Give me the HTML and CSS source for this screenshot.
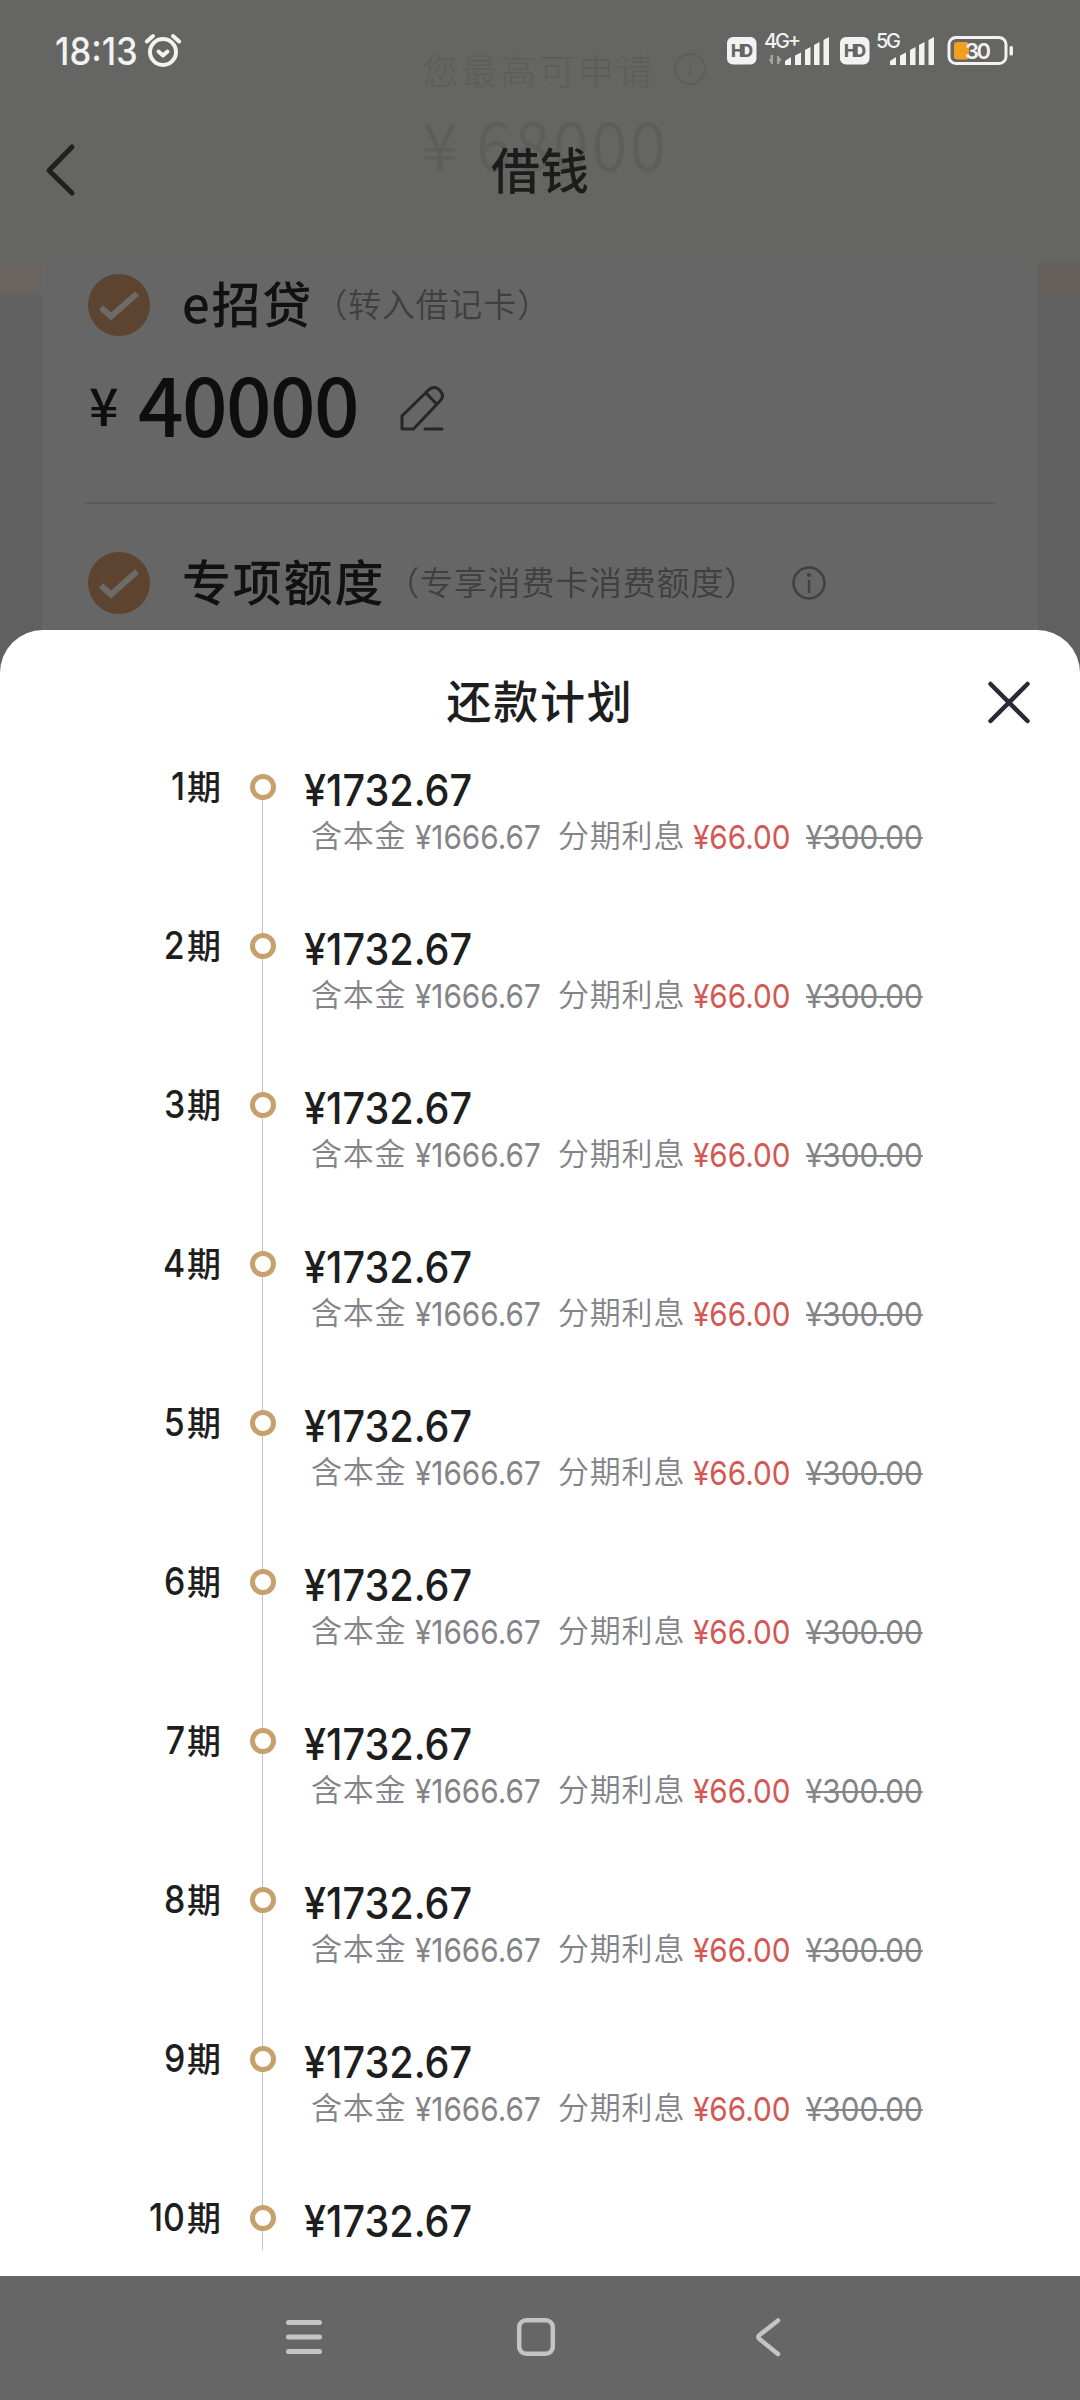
FILE: index.html
```html
<!DOCTYPE html>
<html lang="zh-CN">
<head>
<meta charset="utf-8">
<title>借钱</title>
<link rel="stylesheet" href="styles.css">
</head>
<body>
<div class="screen">
  <div class="page">
    <header class="top">
      <div class="status">
        <span class="time">18:13</span>
        <svg class="alarm" width="40" height="40" viewBox="0 0 40 40" fill="none" stroke="#f2f2f2" stroke-width="4" stroke-linecap="round" stroke-linejoin="round"><circle cx="20" cy="22" r="13"/><path d="M3.8 11.5 10 6M30 6l6.2 5.5M15.5 21.500l4.500 4 4.500-4"/></svg>
        <svg class="signals" width="292" height="40" viewBox="724 31 292 40" fill="#f2f2f2">
          <rect x="727" y="37" width="29.500" height="27.500" rx="6"/><text class="hd" x="731" y="56.500" textLength="22">HD</text>
          <text class="net" x="764" y="48.300" textLength="37">4G+</text>
          <path d="M785 65v-4l6-4v8zM795 65v-9.500l6-3v12.500zM805 65V50l5.500-3v18zM814 65V45l5.500-3v23zM823.500 65V40l5.500-3v28z"/>
          <path d="M773 55v9h-1.500l-3-5h2v-4zM777 64v-8h1.500l3.500 5h-2.500v3z" opacity=".45"/>
          <rect x="840" y="37" width="29.500" height="27.500" rx="6"/><text class="hd" x="844" y="56.500" textLength="22">HD</text>
          <text class="net" x="876" y="48.300" textLength="25">5G</text>
          <path d="M890 65v-4l6-4v8zM900 65v-9.500l6-3v12.500zM910 65V50l5.500-3v18zM919 65V45l5.500-3v23zM928.500 65V40l5.500-3v28z"/>
          <rect x="949" y="37.500" width="57" height="26" rx="7" fill="none" stroke="#f2f2f2" stroke-width="3"/>
          <rect x="954" y="42" width="15" height="17.500" rx="3" fill="#f0a021"/>
          <rect x="1009.500" y="46" width="3.500" height="9.500" rx="1.500"/>
          <text class="level" x="965" y="59.300" textLength="26">30</text>
        </svg>
      </div>
      <div class="ghost">
        <div class="ghost-label"><span>您最高可申请</span><svg width="34" height="34" viewBox="0 0 34 34" fill="none" stroke="#5d5d5c" stroke-width="2"><circle cx="17" cy="17" r="15"/><path d="M17 9v2M17 14v11"/></svg></div>
        <div class="ghost-sum"><span class="ghost-yen">¥</span><span>68000</span></div>
      </div>
      <div class="titlebar">
        <svg class="back" width="32" height="56" viewBox="0 0 32 56" fill="none" stroke="#202020" stroke-width="5" stroke-linecap="round" stroke-linejoin="round"><path d="M27 5 4 28.500 27 51"/></svg>
        <h1>借钱</h1>
      </div>
    </header>
    <main class="body">
      <div class="card">
        <div class="option">
          <svg class="check" width="64" height="64" viewBox="0 0 64 64"><circle cx="32" cy="32" r="31" fill="#5c4430"/><path d="m14 34.500 10 9L50 20.500" fill="none" stroke="#6d6b68" stroke-width="6"/></svg>
          <span class="name">e招贷</span><span class="hint">（转入借记卡）</span>
        </div>
        <div class="amount">
          <span class="yen">¥</span><span class="sum">40000</span>
          <svg width="50" height="50" viewBox="0 0 50 50" fill="none" stroke="#262626" stroke-width="3" stroke-linecap="round" stroke-linejoin="round"><path d="M5 45V32L32 5.500Q38 1 43 6.500T43 17L16.500 45zM29.500 9.500l10 10.500M28 45h17"/></svg>
        </div>
        <div class="option second">
          <svg class="check" width="64" height="64" viewBox="0 0 64 64"><circle cx="32" cy="32" r="31" fill="#5c4430"/><path d="m14 34.500 10 9L50 20.500" fill="none" stroke="#6d6b68" stroke-width="6"/></svg>
          <span class="name">专项额度</span><span class="hint">（专享消费卡消费额度）</span>
          <svg class="info" width="36" height="36" viewBox="0 0 36 36" fill="none" stroke="#404040" stroke-width="2.500"><circle cx="18" cy="18" r="15.500"/><path d="M18 15v13"/><circle cx="18" cy="10" r="2" fill="#404040" stroke="none"/></svg>
        </div>
      </div>
    </main>
  </div>

  <section class="sheet">
    <div class="sheet-head">
      <h2>还款计划</h2>
      <svg class="close" width="48" height="48" viewBox="0 0 48 48" stroke="#2b2838" stroke-width="4.500" stroke-linecap="round"><path d="m5.500 6 37 37M42.500 6l-37 37"/></svg>
    </div>
    <div class="plan">
      <div class="row"><div class="term"><b>1</b>期</div><div class="rail"><i></i></div><div class="detail"><div class="pay">¥1732.67</div><div class="parts"><span>含本金</span><em>¥1666.67</em><span>分期利息</span><em class="now">¥66.00</em><em class="was">¥300.00</em></div></div></div>
      <div class="row"><div class="term"><b>2</b>期</div><div class="rail"><i></i></div><div class="detail"><div class="pay">¥1732.67</div><div class="parts"><span>含本金</span><em>¥1666.67</em><span>分期利息</span><em class="now">¥66.00</em><em class="was">¥300.00</em></div></div></div>
      <div class="row"><div class="term"><b>3</b>期</div><div class="rail"><i></i></div><div class="detail"><div class="pay">¥1732.67</div><div class="parts"><span>含本金</span><em>¥1666.67</em><span>分期利息</span><em class="now">¥66.00</em><em class="was">¥300.00</em></div></div></div>
      <div class="row"><div class="term"><b>4</b>期</div><div class="rail"><i></i></div><div class="detail"><div class="pay">¥1732.67</div><div class="parts"><span>含本金</span><em>¥1666.67</em><span>分期利息</span><em class="now">¥66.00</em><em class="was">¥300.00</em></div></div></div>
      <div class="row"><div class="term"><b>5</b>期</div><div class="rail"><i></i></div><div class="detail"><div class="pay">¥1732.67</div><div class="parts"><span>含本金</span><em>¥1666.67</em><span>分期利息</span><em class="now">¥66.00</em><em class="was">¥300.00</em></div></div></div>
      <div class="row"><div class="term"><b>6</b>期</div><div class="rail"><i></i></div><div class="detail"><div class="pay">¥1732.67</div><div class="parts"><span>含本金</span><em>¥1666.67</em><span>分期利息</span><em class="now">¥66.00</em><em class="was">¥300.00</em></div></div></div>
      <div class="row"><div class="term"><b>7</b>期</div><div class="rail"><i></i></div><div class="detail"><div class="pay">¥1732.67</div><div class="parts"><span>含本金</span><em>¥1666.67</em><span>分期利息</span><em class="now">¥66.00</em><em class="was">¥300.00</em></div></div></div>
      <div class="row"><div class="term"><b>8</b>期</div><div class="rail"><i></i></div><div class="detail"><div class="pay">¥1732.67</div><div class="parts"><span>含本金</span><em>¥1666.67</em><span>分期利息</span><em class="now">¥66.00</em><em class="was">¥300.00</em></div></div></div>
      <div class="row"><div class="term"><b>9</b>期</div><div class="rail"><i></i></div><div class="detail"><div class="pay">¥1732.67</div><div class="parts"><span>含本金</span><em>¥1666.67</em><span>分期利息</span><em class="now">¥66.00</em><em class="was">¥300.00</em></div></div></div>
      <div class="row last"><div class="term"><b>10</b>期</div><div class="rail"><i></i></div><div class="detail"><div class="pay">¥1732.67</div></div></div>
    </div>
  </section>

  <nav class="navbar">
    <svg width="44" height="44" viewBox="0 0 44 44" stroke="#c4c4c4" stroke-width="5" stroke-linecap="round"><path d="M6.500 7.500h31M6.500 22h31M6.500 36.500h31"/></svg>
    <svg width="44" height="44" viewBox="0 0 44 44" fill="none" stroke="#c4c4c4" stroke-width="4.500"><rect x="5.200" y="5.200" width="33.600" height="33.600" rx="7"/></svg>
    <svg width="44" height="44" viewBox="0 0 44 44" fill="none" stroke="#c4c4c4" stroke-width="4.500" stroke-linecap="round" stroke-linejoin="round"><path d="M32 5.500 13.500 20Q11 22 13.500 24L32 39"/></svg>
  </nav>
</div>
</body>
</html>
```
FILE: styles.css
```css
* { box-sizing: border-box; }
body { margin: 0; background: #666; font-family: "Noto Sans CJK SC", sans-serif; }
svg { display: block; flex: none; }
h1, h2 { margin: 0; font-weight: 500; }
.screen { width: 1080px; height: 2400px; display: flex; flex-direction: column; overflow: hidden; }

.page { height: 680px; flex: none; background: #606060; }
.top { height: 263px; background: #656563; display: grid; grid-template-rows: 102px 161px; position: relative; }
.status { display: flex; align-items: flex-start; padding: 31px 0 0 55px; color: #f2f2f2; z-index: 1; }
.time { width: 88px; font: 500 38.5px/40px Inter, sans-serif; transform: scaleX(.9); transform-origin: 0 50%; white-space: nowrap; }
.alarm { margin-top: -1px; }
.signals { margin-left: 541px; font-family: Inter, sans-serif; }
.hd { font-size: 17px; font-weight: 800; fill: #656563; }
.net { font-size: 20px; font-weight: 500; }
.level { font-size: 22px; font-weight: 600; }

/* Page content showing faintly through the translucent header */
.ghost { position: absolute; left: 422px; top: 44px; color: #5d5d5c; font-weight: 300; }
.ghost-label { display: flex; align-items: center; gap: 17px; font-size: 36px; line-height: 50px; letter-spacing: 3px; }
.ghost-sum { display: flex; font-size: 65px; line-height: 90px; letter-spacing: 2.8px; font-weight: 350; margin-top: 4px; }
.ghost-yen { width: 54px; }

.titlebar { display: grid; grid-template-columns: 80px 1fr 80px; align-items: center; height: 136px; z-index: 1; }
.back { margin-left: 45px; }
.titlebar h1 { text-align: center; font-size: 49px; line-height: 70px; color: #1c1c1c; margin-top: -4px; }

.body { padding: 0 42px; height: 417px; background: linear-gradient(90deg, #6a6460, #665e5a) top / 100% 32px no-repeat; }
.card { background: #666; height: 417px; padding: 0 43px; }
.option { display: flex; align-items: center; height: 84px; padding-left: 2px; }
.check { margin-right: 31px; }
.name { font-size: 49px; font-weight: 500; letter-spacing: 1.8px; line-height: 70px; color: #111; margin-top: -6px; }
.hint { font-size: 33px; letter-spacing: .8px; color: #3f3f3f; line-height: 50px; margin-left: 1px; margin-top: -4px; font-weight: 350; }
.amount { display: flex; align-items: center; height: 157px; padding: 0 0 32px 4px; border-bottom: 2px solid #595959; color: #0e0e0e; font-weight: 500; }
.yen { width: 49px; font-size: 52px; line-height: 80px; margin-top: -10px; }
.sum { width: 259px; font-size: 80px; letter-spacing: -1.6px; line-height: 110px; margin-top: -14px; }
.second { height: 158px; }
.info { margin-left: 33px; }

.sheet { margin-top: -50px; height: 1646px; flex: none; background: #fff; border-radius: 43px 43px 0 0; color: #1e1e1e; position: relative; }
.sheet-head { height: 131px; padding-top: 48px; display: grid; grid-template-columns: 95px 1fr 95px; align-items: start; }
.sheet-head h2 { grid-column: 2; text-align: center; font-size: 45px; letter-spacing: 1.7px; line-height: 50px; margin-top: -3px; }
.close { margin-top: 0; }

.row { display: grid; grid-template-columns: 221px 83px 1fr; height: 159px; }
.last { height: 84px; }
.term { text-align: right; font-size: 34px; font-weight: 500; line-height: 50px; }
.term b { display: inline-block; font: 500 38.5px/50px Inter, sans-serif; transform: scaleX(.88); transform-origin: 100% 50%; margin-right: 2px; }
.rail { display: flex; flex-direction: column; align-items: center; }
.rail::before, .rail::after { content: ""; width: 1px; background: #c2c2c2; height: 13px; }
.rail::after { flex: 1; }
.row:first-child .rail::before { background: none; }
.last .rail::after { flex: none; height: 19px; }
.last .rail::after { height: 19px; }
.last .rail { height: 90px; }
.rail i { width: 26px; height: 26px; border: 5px solid #c6a06d; border-radius: 50%; flex: none; }
.pay { font: 500 44px/52px Inter, sans-serif; transform: scaleX(.9); transform-origin: 0 50%; width: 200px; margin-top: 3px; }
.parts { display: grid; grid-template-columns: 104px 143px 135px 113px 130px; margin-left: 7px; font-size: 31px; line-height: 40px; color: #838488; font-weight: 350; letter-spacing: .8px; margin-top: -2px; }
.parts em { font: 400 33px/40px Inter, sans-serif; letter-spacing: 0; transform: scaleX(.9); transform-origin: 0 50%; margin-top: 3px; white-space: nowrap; justify-self: start; }
.parts .now { color: #d35853; }
.parts .was { text-decoration: line-through; text-decoration-thickness: 2px; }

.navbar { height: 124px; background: #666; display: flex; gap: 188px; padding: 39px 0 0 282px; }
```
